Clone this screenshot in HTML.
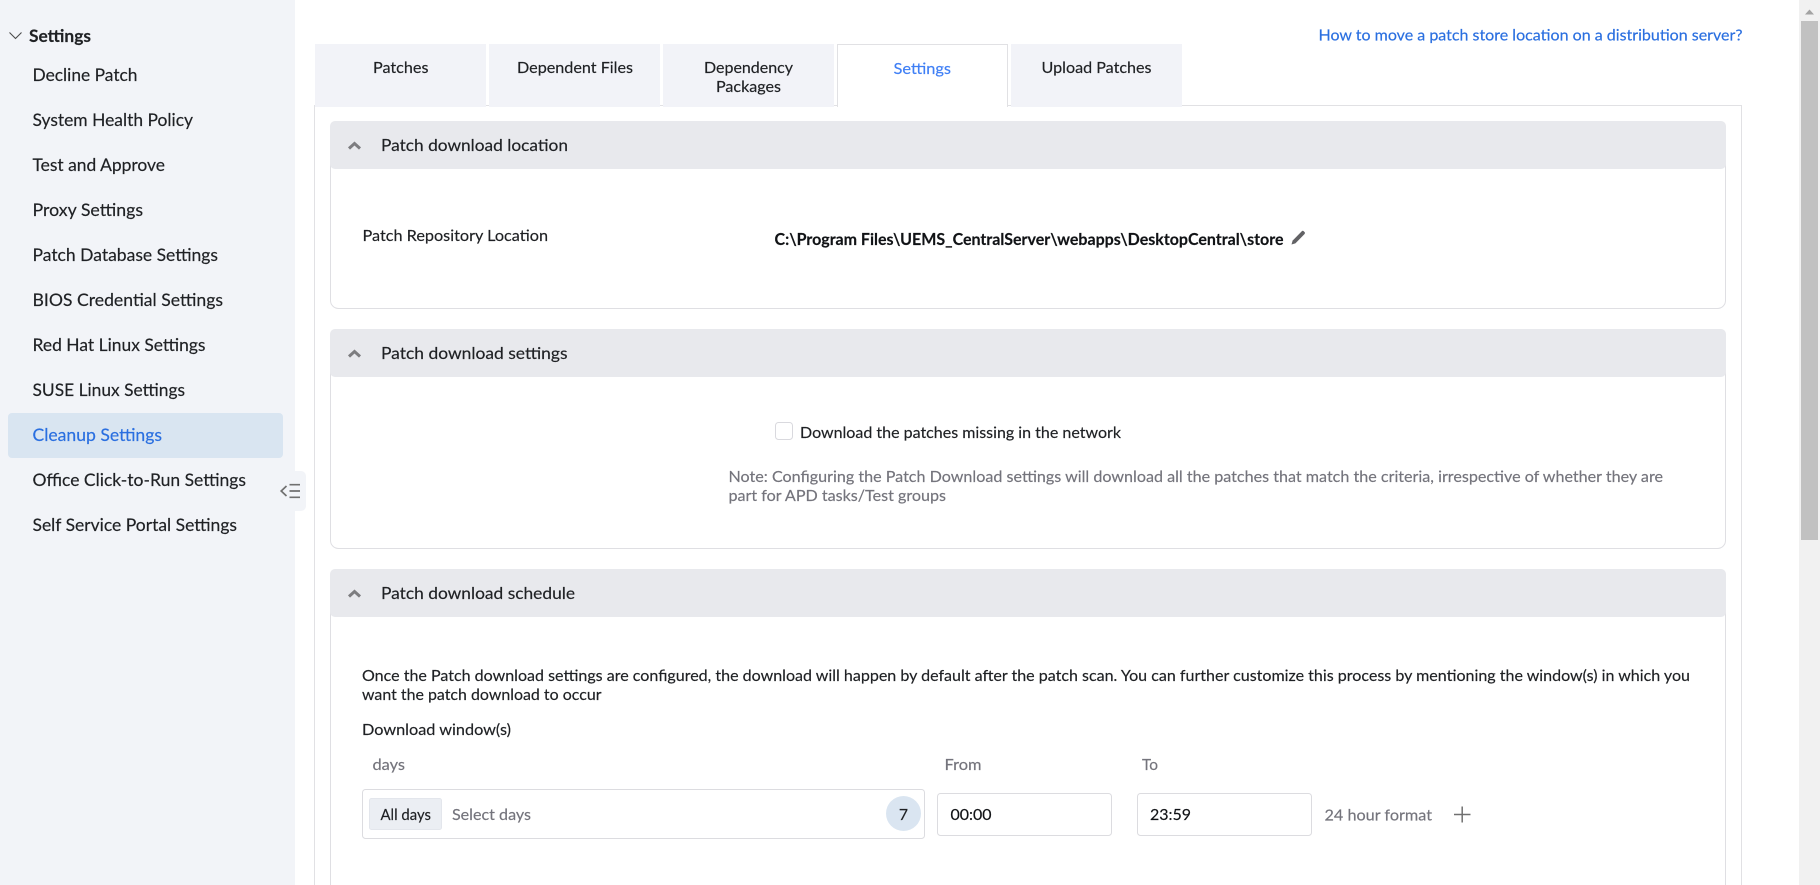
<!DOCTYPE html>
<html lang="en">
<head>
<meta charset="utf-8">
<title>Patch Settings</title>
<style>
html,body{margin:0;padding:0;width:1820px;height:885px;overflow:hidden;background:#fff}
svg{display:block}
text{font-family:"Lato","Carlito","Liberation Sans",sans-serif;fill:#1f2124;stroke:#1f2124;stroke-width:.18}
.s{font-size:17px}
.m{font-size:15.8px}
.t{font-size:16.8px}
.g{fill:#74747c;stroke:#74747c}
.b{fill:#2a6fe0;stroke:#2a6fe0}
.k{fill:#111316;stroke:#111316}
</style>
</head>
<body>
<svg width="1820" height="885" viewBox="0 0 1820 885" xmlns="http://www.w3.org/2000/svg">
<!-- sidebar -->
<rect x="0" y="0" width="295" height="885" fill="#f2f4f8"/>
<rect x="280" y="471" width="26" height="40" rx="5" fill="#f2f4f8"/>
<path d="M286.5 486L281.2 491L286.5 496" fill="none" stroke="#707070" stroke-width="1.7"/>
<path d="M289.5 484.7H300M289.5 491H300M289.5 497.3H300" fill="none" stroke="#707070" stroke-width="1.7"/>
<path d="M9.5 32.5L15.5 38.5L21.5 32.5" fill="none" stroke="#4a4a4a" stroke-width="1.1"/>
<text x="29" y="42" class="s" font-weight="700" textLength="62" lengthAdjust="spacingAndGlyphs">Settings</text>
<text x="32.5" y="81" class="s" textLength="105" lengthAdjust="spacingAndGlyphs">Decline Patch</text>
<text x="32.5" y="126" class="s" textLength="160.5" lengthAdjust="spacingAndGlyphs">System Health Policy</text>
<text x="32.5" y="171" class="s" textLength="132.5" lengthAdjust="spacingAndGlyphs">Test and Approve</text>
<text x="32.5" y="216" class="s" textLength="110.5" lengthAdjust="spacingAndGlyphs">Proxy Settings</text>
<text x="32.5" y="261" class="s" textLength="185.5" lengthAdjust="spacingAndGlyphs">Patch Database Settings</text>
<text x="32.5" y="306" class="s" textLength="190.5" lengthAdjust="spacingAndGlyphs">BIOS Credential Settings</text>
<text x="32.5" y="351" class="s" textLength="173" lengthAdjust="spacingAndGlyphs">Red Hat Linux Settings</text>
<text x="32.5" y="396" class="s" textLength="152.5" lengthAdjust="spacingAndGlyphs">SUSE Linux Settings</text>
<rect x="8" y="413" width="275" height="45" rx="4" fill="#d9e5f1"/>
<text x="32.5" y="441" class="s b" textLength="129.5" lengthAdjust="spacingAndGlyphs">Cleanup Settings</text>
<text x="32.5" y="486" class="s" textLength="213.5" lengthAdjust="spacingAndGlyphs">Office Click-to-Run Settings</text>
<text x="32.5" y="531" class="s" textLength="204.5" lengthAdjust="spacingAndGlyphs">Self Service Portal Settings</text>

<!-- link -->
<text x="1318.5" y="40.5" class="m b" textLength="424" lengthAdjust="spacingAndGlyphs">How to move a patch store location on a distribution server?</text>

<!-- panel -->
<path d="M314.5 885V105.5H1741.5V885" fill="none" stroke="#e1e1e4" stroke-width="1"/>

<!-- tabs -->
<rect x="315" y="44" width="171" height="63" fill="#f2f3f8"/>
<rect x="489" y="44" width="171" height="63" fill="#f2f3f8"/>
<rect x="663" y="44" width="171" height="63" fill="#f2f3f8"/>
<rect x="837" y="44" width="171" height="64" fill="#fff"/>
<path d="M837.5 107V44.5H1007.5V107" fill="none" stroke="#e1e1e4" stroke-width="1"/>
<rect x="1011" y="44" width="171" height="63" fill="#f2f3f8"/>
<text x="373" y="73" class="m" textLength="55.5" lengthAdjust="spacingAndGlyphs">Patches</text>
<text x="517" y="73" class="m" textLength="116" lengthAdjust="spacingAndGlyphs">Dependent Files</text>
<text x="704" y="73" class="m" textLength="89" lengthAdjust="spacingAndGlyphs">Dependency</text>
<text x="716" y="92" class="m" textLength="65" lengthAdjust="spacingAndGlyphs">Packages</text>
<text x="893.5" y="74" class="m" style="fill:#3f7ff5;stroke:#3f7ff5" textLength="57.5" lengthAdjust="spacingAndGlyphs">Settings</text>
<text x="1041.5" y="73" class="m" textLength="110" lengthAdjust="spacingAndGlyphs">Upload Patches</text>

<!-- section bodies -->
<rect x="330.5" y="150.5" width="1395" height="158" rx="8" fill="#fff" stroke="#dfdfe3"/>
<rect x="330.5" y="358.5" width="1395" height="190" rx="8" fill="#fff" stroke="#dfdfe3"/>
<path d="M330.5 885V600M1725.5 885V600" fill="none" stroke="#dfdfe3"/>

<!-- section headers -->
<rect x="330" y="121" width="1396" height="48" rx="5" fill="#e8e9ed"/>
<rect x="330" y="329" width="1396" height="48" rx="5" fill="#e8e9ed"/>
<rect x="330" y="569" width="1396" height="48" rx="5" fill="#e8e9ed"/>
<path d="M349 148.5L354.5 143.5L360 148.5" fill="none" stroke="#7d7d80" stroke-width="3"/>
<path d="M349 356.5L354.5 351.5L360 356.5" fill="none" stroke="#7d7d80" stroke-width="3"/>
<path d="M349 596.5L354.5 591.5L360 596.5" fill="none" stroke="#7d7d80" stroke-width="3"/>
<text x="381" y="151" class="t" textLength="187" lengthAdjust="spacingAndGlyphs">Patch download location</text>
<text x="381" y="359" class="t" textLength="186.5" lengthAdjust="spacingAndGlyphs">Patch download settings</text>
<text x="381" y="599" class="t" textLength="194" lengthAdjust="spacingAndGlyphs">Patch download schedule</text>

<!-- section 1 -->
<text x="362.5" y="241" class="m" textLength="185.5" lengthAdjust="spacingAndGlyphs">Patch Repository Location</text>
<text x="774.5" y="245" class="m k" font-weight="700" textLength="509" lengthAdjust="spacingAndGlyphs">C:\Program Files\UEMS_CentralServer\webapps\DesktopCentral\store</text>
<path d="M1291.5 244.5L1292.6 240.6L1301.8 231.2Q1302.8 230.4 1303.7 231.2L1304.6 232.1Q1305.4 233 1304.6 234L1295.4 243.4Z" fill="#626265"/>

<!-- section 2 -->
<rect x="775.5" y="422.5" width="17" height="17" rx="3" fill="#fff" stroke="#d9d9de"/>
<text x="800" y="438" class="m" textLength="321" lengthAdjust="spacingAndGlyphs">Download the patches missing in the network</text>
<text x="728.5" y="482" class="m g" textLength="934.5" lengthAdjust="spacingAndGlyphs">Note: Configuring the Patch Download settings will download all the patches that match the criteria, irrespective of whether they are</text>
<text x="728.5" y="501" class="m g" textLength="217.5" lengthAdjust="spacingAndGlyphs">part for APD tasks/Test groups</text>

<!-- section 3 -->
<text x="362" y="681" class="m" textLength="1328" lengthAdjust="spacingAndGlyphs">Once the Patch download settings are configured, the download will happen by default after the patch scan. You can further customize this process by mentioning the window(s) in which you</text>
<text x="362" y="700" class="m" textLength="239.5" lengthAdjust="spacingAndGlyphs">want the patch download to occur</text>
<text x="362" y="735" class="m" textLength="149" lengthAdjust="spacingAndGlyphs">Download window(s)</text>
<text x="372.5" y="770" class="m g" textLength="32.5" lengthAdjust="spacingAndGlyphs">days</text>
<text x="944.5" y="770" class="m g" textLength="37" lengthAdjust="spacingAndGlyphs">From</text>
<text x="1142" y="770" class="m g" textLength="16" lengthAdjust="spacingAndGlyphs">To</text>

<rect x="362.5" y="789.5" width="562" height="49" rx="3" fill="#fff" stroke="#dcdce0"/>
<rect x="369.5" y="798.5" width="72" height="31" rx="2" fill="#ebeef3" stroke="#e3e6ec"/>
<text x="380.5" y="820" class="m" textLength="50.5" lengthAdjust="spacingAndGlyphs">All days</text>
<text x="452" y="820" class="m g" textLength="79" lengthAdjust="spacingAndGlyphs">Select days</text>
<circle cx="903.5" cy="813.5" r="17.5" fill="#dae5f1"/>
<text x="903.5" y="820" class="m" text-anchor="middle">7</text>

<rect x="937.5" y="793.5" width="174" height="42" rx="3" fill="#fff" stroke="#dcdce0"/>
<text x="950.5" y="820" class="m k" textLength="41" lengthAdjust="spacingAndGlyphs">00:00</text>
<rect x="1137.5" y="793.5" width="174" height="42" rx="3" fill="#fff" stroke="#dcdce0"/>
<text x="1150" y="820" class="m k" textLength="41" lengthAdjust="spacingAndGlyphs">23:59</text>
<text x="1324.5" y="820.5" class="m g" textLength="107.5" lengthAdjust="spacingAndGlyphs">24 hour format</text>
<path d="M1454 814.5H1470.5M1462.2 806.5V822.5" fill="none" stroke="#707070" stroke-width="1.5"/>

<!-- scrollbar -->
<rect x="1799" y="0" width="21" height="885" fill="#f1f1f1"/>
<rect x="1801" y="21" width="17" height="519" fill="#c1c1c1"/>
<path d="M1805 14.5L1809.5 9.5L1814 14.5Z" fill="#a3a3a3"/>
</svg>
</body>
</html>
